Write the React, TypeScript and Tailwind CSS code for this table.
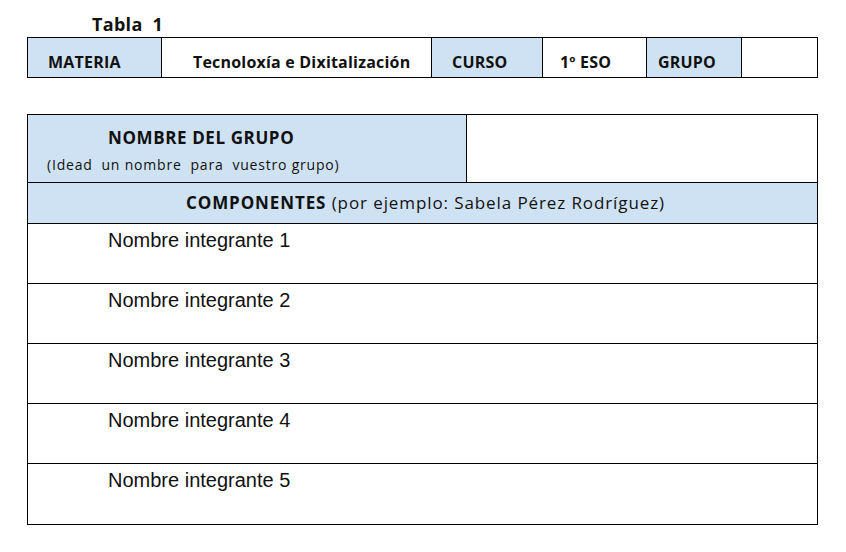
const headCell = "bg-[#cfe2f3] border-r border-black flex items-center pt-[9px]";
const plainCell = "border-r border-black flex items-center pt-[9px]";

const integrantes = [1, 2, 3, 4, 5];

export default function App() {
  return (
    <div className="w-[846px] h-[552px] bg-white font-['Open_Sans',sans-serif] text-[#111]">
      <div className="pl-[92px] pt-[12px] h-[37px] text-[18px] font-bold leading-6 tracking-[0.3px]">
        Tabla&nbsp; 1
      </div>

      {/* cabecera materia / curso / grupo */}
      <div className="ml-[27px] w-[791px] h-[41px] border border-black flex text-[16px] font-bold tracking-[0.2px]">
        <div className={`${headCell} w-[134px] pl-[20px]`}>MATERIA</div>
        <div className={`${plainCell} w-[270px] pl-[31px]`}>Tecnoloxía e Dixitalización</div>
        <div className={`${headCell} w-[111px] pl-[20px]`}>CURSO</div>
        <div className={`${plainCell} w-[104px] pl-[17px]`}>1º ESO</div>
        <div className={`${headCell} w-[95px] pl-[11px]`}>GRUPO</div>
        <div className="flex-1" />
      </div>

      {/* grupo y componentes */}
      <div className="ml-[27px] mt-[36px] w-[791px] border border-black">
        <div className="flex h-[68px] border-b border-black">
          <div className="bg-[#cfe2f3] w-[439px] border-r border-black flex flex-col">
            <div className="pl-[80px] pt-[11px] text-[17px] font-bold leading-6 tracking-[0.6px]">NOMBRE DEL GRUPO</div>
            <div className="pl-[19px] pt-[5px] text-[14px] leading-5 tracking-[0.8px]">
              (Idead&nbsp; un nombre&nbsp; para&nbsp; vuestro grupo)
            </div>
          </div>
          <div className="flex-1" />
        </div>
        <div className="bg-[#cfe2f3] h-[41px] border-b border-black flex items-center justify-center pl-[6px] text-[17px] tracking-[0.9px]">
          <span className="font-bold">COMPONENTES</span>
          <span>&nbsp;(por ejemplo: Sabela Pérez Rodríguez)</span>
        </div>
        {integrantes.map((n, i) => (
          <div
            key={n}
            className={`h-[60px] pl-[80px] pt-[4px] text-[20px] leading-6 font-['Liberation_Sans',sans-serif] ${i < integrantes.length - 1 ? "border-b border-black" : ""}`}
          >
            Nombre integrante {n}
          </div>
        ))}
      </div>
    </div>
  );
}
